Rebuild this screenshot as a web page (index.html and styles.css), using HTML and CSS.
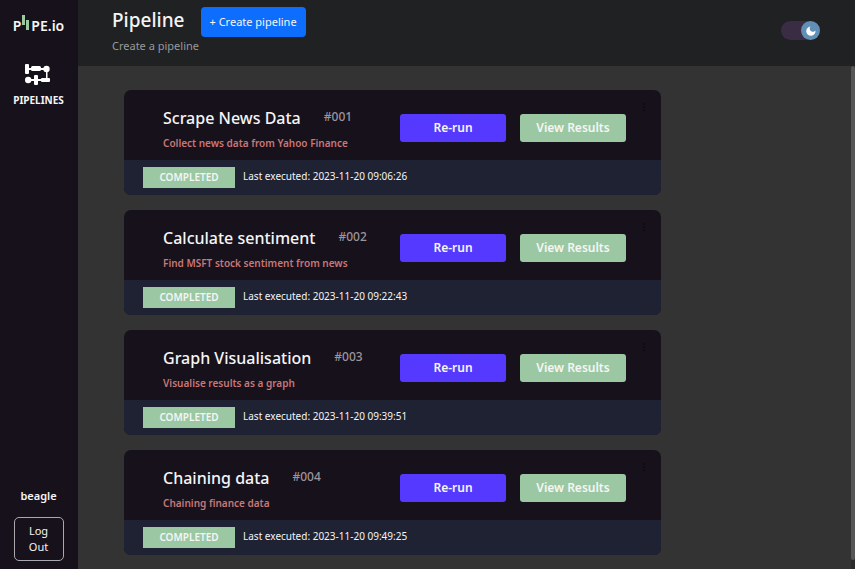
FILE: index.html
```
<!DOCTYPE html>
<html lang="en">
<head>
<meta charset="utf-8">
<meta name="viewport" content="width=device-width, initial-scale=1">
<title>Pipeline</title>
<link rel="stylesheet" href="styles.css">
</head>
<body>
<div class="app">
  <nav class="sidebar">
    <a class="logo" href="#"><span>P</span><svg class="bars" width="8" height="18" viewBox="0 0 8 18" aria-hidden="true"><path d="M0 2h3v10H0zM4 7h3v10H4z" fill="#9bc8a3"/></svg><span>PE.io</span></a>
    <a class="nav-item" href="#">
      <svg width="26" height="22" viewBox="0 0 26 22" fill="#fff" aria-hidden="true">
        <path d="M3 5h19v2H3zM3 16h19v2H3zM21 6h1.500v11H21z"/>
        <rect x="0" y="1" width="4" height="10" rx="1"/>
        <rect x="6" y="3" width="10" height="5" rx="1.500"/>
        <circle cx="21.500" cy="6" r="3.200"/>
        <circle cx="3.200" cy="17" r="3.200"/>
        <rect x="9" y="12" width="4" height="10" rx="1"/>
        <rect x="16" y="15" width="9" height="4" rx="1"/>
      </svg>
      <span>PIPELINES</span>
    </a>
    <div class="account">
      <span class="user">beagle</span>
      <button class="logout" type="button">Log Out</button>
    </div>
  </nav>
  <div class="page">
    <header class="topbar">
      <div>
        <div class="title-row">
          <h1>Pipeline</h1>
          <button class="create" type="button">+ Create pipeline</button>
        </div>
        <p class="subtitle">Create a pipeline</p>
      </div>
      <button class="theme" type="button" role="switch" aria-checked="true" aria-label="Dark mode">
        <span class="knob"><svg width="10" height="10" viewBox="0 0 10 10" aria-hidden="true"><path d="M4.500 .6A2.600 2.600 0 1 0 9.400 4.500 4.600 4.600 0 1 1 4.500 .6z" fill="#fff"/></svg></span>
      </button>
    </header>
    <main class="content">
      <div class="cards">
        <article class="card">
          <div class="card-main">
            <div class="info"><div class="name-row"><h2>Scrape News Data</h2><span class="num">#001</span></div><p class="desc">Collect news data from Yahoo Finance</p></div>
            <button class="action run" type="button">Re-run</button>
            <button class="action view" type="button">View Results</button>
            <button class="more" type="button" aria-label="More options"><svg width="4" height="10" viewBox="0 0 4 10" aria-hidden="true"><path d="M1 1h2v2H1zM1 4h2v2H1zM1 7h2v2H1z"/></svg></button>
          </div>
          <footer class="card-foot"><span class="status">COMPLETED</span><span>Last executed: 2023-11-20 09:06:26</span></footer>
        </article>
        <article class="card">
          <div class="card-main">
            <div class="info"><div class="name-row"><h2>Calculate sentiment</h2><span class="num">#002</span></div><p class="desc">Find MSFT stock sentiment from news</p></div>
            <button class="action run" type="button">Re-run</button>
            <button class="action view" type="button">View Results</button>
            <button class="more" type="button" aria-label="More options"><svg width="4" height="10" viewBox="0 0 4 10" aria-hidden="true"><path d="M1 1h2v2H1zM1 4h2v2H1zM1 7h2v2H1z"/></svg></button>
          </div>
          <footer class="card-foot"><span class="status">COMPLETED</span><span>Last executed: 2023-11-20 09:22:43</span></footer>
        </article>
        <article class="card">
          <div class="card-main">
            <div class="info"><div class="name-row"><h2>Graph Visualisation</h2><span class="num">#003</span></div><p class="desc">Visualise results as a graph</p></div>
            <button class="action run" type="button">Re-run</button>
            <button class="action view" type="button">View Results</button>
            <button class="more" type="button" aria-label="More options"><svg width="4" height="10" viewBox="0 0 4 10" aria-hidden="true"><path d="M1 1h2v2H1zM1 4h2v2H1zM1 7h2v2H1z"/></svg></button>
          </div>
          <footer class="card-foot"><span class="status">COMPLETED</span><span>Last executed: 2023-11-20 09:39:51</span></footer>
        </article>
        <article class="card">
          <div class="card-main">
            <div class="info"><div class="name-row"><h2>Chaining data</h2><span class="num">#004</span></div><p class="desc">Chaining finance data</p></div>
            <button class="action run" type="button">Re-run</button>
            <button class="action view" type="button">View Results</button>
            <button class="more" type="button" aria-label="More options"><svg width="4" height="10" viewBox="0 0 4 10" aria-hidden="true"><path d="M1 1h2v2H1zM1 4h2v2H1zM1 7h2v2H1z"/></svg></button>
          </div>
          <footer class="card-foot"><span class="status">COMPLETED</span><span>Last executed: 2023-11-20 09:49:25</span></footer>
        </article>
      </div>
      <div class="scroll-track"><div class="scroll-thumb"></div></div>
    </main>
  </div>
</div>
</body>
</html>
```
FILE: styles.css
```
* { box-sizing: border-box; }
body {
  margin: 0;
  background: #333;
  color: #f5f5f5;
  font-family: "Segoe UI", "Noto Sans", sans-serif;
  font-size: 11px;
  line-height: 16px;
}
h1, h2, p { margin: 0; }
a { color: inherit; text-decoration: none; }
button { font: inherit; color: inherit; border: 0; padding: 0; cursor: pointer; }
.app { display: flex; min-height: 100vh; }

.sidebar {
  flex: 0 0 78px;
  display: flex;
  flex-direction: column;
  align-items: center;
  padding: 12px 9px 8px 8px;
  background: #17111c;
}
.logo {
  display: flex;
  align-items: center;
  gap: 1px;
  font-size: 14px;
  font-weight: 600;
  line-height: 28px;
}
.bars { margin-bottom: 9px; }
.nav-item {
  display: flex;
  flex-direction: column;
  align-items: center;
  gap: 7px;
  margin-top: 23px;
  font-size: 10px;
  font-weight: 700;
}
.account {
  display: flex;
  flex-direction: column;
  align-items: center;
  gap: 13px;
  margin-top: auto;
  font-weight: 600;
}
.logout {
  width: 50px;
  padding: 5px 8px;
  border: 1px solid #aaa7ad;
  border-radius: 5px;
  background: transparent;
  font-size: 11px;
  font-weight: 400;
}

.page { flex: 1; min-width: 0; display: flex; flex-direction: column; }
.topbar {
  display: flex;
  justify-content: space-between;
  align-items: flex-start;
  padding: 7px 35px 12px 34px;
  background: #1f2123;
}
.title-row { display: flex; align-items: flex-start; gap: 16px; }
h1 { font-size: 19px; font-weight: 500; line-height: 26px; }
.create {
  height: 30px;
  padding: 0 9px;
  border-radius: 4px;
  background: #0d6efd;
}
.subtitle { margin-top: 1px; color: #98999a; }
.theme {
  display: flex;
  justify-content: flex-end;
  width: 39px;
  margin-top: 14px;
  border-radius: 10px;
  background: #3a2c42;
}
.knob {
  display: grid;
  place-items: center;
  width: 19px;
  height: 19px;
  border-radius: 50%;
  background: #628fb5;
}

.content { flex: 1; display: flex; justify-content: space-between; }
.cards {
  flex: 0 1 583px;
  display: flex;
  flex-direction: column;
  gap: 15px;
  padding: 24px 0 14px 46px;
}
.card { border-radius: 7px; overflow: hidden; background: #17111c; }
.card-main { display: flex; align-items: flex-start; padding: 12px 15px 7px 39px; }
.info { flex: 1; }
.name-row { display: flex; gap: 23px; }
h2 { font-size: 16px; font-weight: 500; line-height: 32px; }
.num { color: #9c959d; font-size: 12px; font-weight: 500; line-height: 30px; }
.desc { color: #c97777; font-size: 10px; font-weight: 600; line-height: 19px; }
.action {
  width: 106px;
  height: 28px;
  margin: 12px 14px 0 0;
  border-radius: 3px;
  font-size: 12px;
  font-weight: 600;
  line-height: 18px;
}
.run { background: #5639ff; }
.view { background: #9bc8a3; }
.more { display: flex; margin-left: 2px; background: transparent; color: #0e0b11; }
.more svg { fill: currentColor; }
.card-foot {
  display: flex;
  gap: 8px;
  padding: 7px 19px;
  background: #1f2232;
  font-size: 10px;
  line-height: 19px;
}
.status {
  width: 92px;
  background: #9bc8a3;
  font-weight: 600;
  line-height: 21px;
  text-align: center;
}
.scroll-track { width: 4px; background: #2b2b2b; padding-bottom: 9px; display: flex; }
.scroll-thumb { flex: 1; border-radius: 2px; background: #565656; }
```
